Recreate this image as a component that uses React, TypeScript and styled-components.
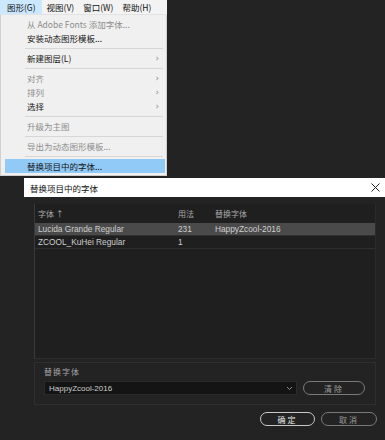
import { createGlobalStyle } from "styled-components"
import styled from "styled-components"

// ── Global ────────────────────────────────────────────────────────────────────

const GlobalStyle = createGlobalStyle`
    html, body {
        margin: 0;
        padding: 0;
        background: #232323;
    }
    body {
        font-family: "Liberation Sans", "Noto Sans CJK SC", sans-serif;
        width: 385px;
        height: 440px;
        overflow: hidden;
    }
`

const Page = styled.div`
    width: 385px;
    height: 440px;
    background: #232323;
    display: flex;
    flex-direction: column;
`

// ── Menu ──────────────────────────────────────────────────────────────────────

const MenuWrap = styled.div`
    width: 167px;
    display: flex;
    flex-direction: column;
`

const MenuBar = styled.div`
    height: 14px;
    background: #f3f3f3;
    border-bottom: 1px solid #e2e2e2;
    display: flex;
    align-items: stretch;
    font-family: "Noto Sans CJK SC", sans-serif;
    font-size: 8.5px;
    color: #111;
`

const MenuBarItem = styled.div<{ $open?: boolean; $lead: number }>`
    display: flex;
    align-items: center;
    padding: 0 ${({ $open }) => ($open ? "6px" : "0")} 0 ${({ $lead }) => $lead}px;
    background: ${({ $open }) => ($open ? "#cce8ff" : "transparent")};
`

const Dropdown = styled.div`
    background: #f0f0f0;
    border: 1px solid #cfcfcf;
    border-top: none;
    padding: 2px 1px 2px 4px;
    display: flex;
    flex-direction: column;
    font-family: "Noto Sans CJK SC", sans-serif;
    font-size: 8.5px;
`

const MenuItem = styled.div<{ $disabled?: boolean; $active?: boolean }>`
    height: 14px;
    display: flex;
    align-items: center;
    justify-content: space-between;
    padding: 0 6px 0 22px;
    color: ${({ $disabled }) => ($disabled ? "#8d8d8d" : "#141414")};
    background: ${({ $active }) => ($active ? "#91c9f7" : "transparent")};
`

const Arrow = styled.span`
    color: #8a8a8a;
    font-size: 9px;
    font-family: "DejaVu Sans", sans-serif;
`

const MenuSep = styled.div`
    height: 1px;
    background: #d7d7d7;
    margin: 3px 2px 2px 20px;
`

// ── Dialog ────────────────────────────────────────────────────────────────────

const Dialog = styled.div`
    margin: 2px 0 0 24px;
    flex: 1;
    display: flex;
    flex-direction: column;
`

const TitleBar = styled.div`
    height: 19px;
    background: #ffffff;
    display: flex;
    align-items: center;
    justify-content: space-between;
    padding: 0 5px 0 6px;
    font-family: "Noto Sans CJK SC", sans-serif;
    font-size: 8.5px;
    color: #111;
`

const DialogBody = styled.div`
    padding: 7px 9px 0 10px;
    display: flex;
    flex-direction: column;
`

const TablePanel = styled.div`
    height: 155px;
    background: #1f1f1f;
    border-left: 1px solid #3a3a3a;
    border-right: 1px solid #2a2a2a;
    border-bottom: 1px solid #2c2c2c;
    box-sizing: border-box;
    padding: 2px 0 0 0;
    font-size: 8px;
    color: #c8c8c8;
`

const TableRow = styled.div<{ $selected?: boolean; $header?: boolean }>`
    display: grid;
    grid-template-columns: 140px 37px 1fr;
    height: ${({ $header }) => ($header ? "15px" : "12px")};
    align-items: center;
    padding-left: 3px;
    background: ${({ $selected }) => ($selected ? "#4a4a4a" : "transparent")};
    border-bottom: 1px solid ${({ $header }) => ($header ? "transparent" : "#2f2f2f")};
    font-family: ${({ $header }) =>
        $header ? `"Noto Sans CJK SC", sans-serif` : `"Liberation Sans", sans-serif`};
    font-size: ${({ $header }) => ($header ? "8px" : "8.3px")};
    color: ${({ $header }) => ($header ? "#a9a9a9" : "#cfcfcf")};
    margin-bottom: ${({ $header }) => ($header ? "1px" : "0")};
`

const GroupBox = styled.div`
    margin-top: 3px;
    height: 43px;
    border: 1px solid #2f2f2f;
    box-sizing: border-box;
    padding: 3px 10px 0 9px;
    display: flex;
    flex-direction: column;
    gap: 4px;
`

const GroupLabel = styled.div`
    font-family: "Noto Sans CJK SC", sans-serif;
    font-size: 8px;
    color: #a6a6a6;
    letter-spacing: 1px;
`

const FieldRow = styled.div`
    display: flex;
    align-items: center;
    gap: 6px;
`

const SelectBox = styled.div`
    width: 253px;
    height: 12px;
    background: #141414;
    border: 1px solid #2a2a2a;
    display: flex;
    align-items: center;
    justify-content: space-between;
    padding: 0 3px 0 4px;
    box-sizing: content-box;
    font-size: 8px;
    color: #cdcdcd;
`

const PillButton = styled.div<{ $w: number; $primary?: boolean }>`
    width: ${({ $w }) => $w}px;
    height: 12px;
    border: 1px solid ${({ $primary }) => ($primary ? "#c8c8c8" : "#7a7a7a")};
    border-radius: 8px;
    display: flex;
    align-items: center;
    justify-content: center;
    font-family: "Noto Sans CJK SC", sans-serif;
    font-size: 8px;
    letter-spacing: 2px;
    color: ${({ $primary }) => ($primary ? "#e6e6e6" : "#9a9a9a")};
`

const ButtonRow = styled.div`
    display: flex;
    justify-content: flex-end;
    gap: 6px;
    padding: 7px 0 0 0;
    margin-right: -1px;
`

// ── Icons ─────────────────────────────────────────────────────────────────────

function CloseIcon() {
    return (
        <svg width="9" height="9" viewBox="0 0 9 9">
            <path d="M0.5 0.5 L8.5 8.5 M8.5 0.5 L0.5 8.5" stroke="#222" strokeWidth="1" />
        </svg>
    )
}

function Chevron() {
    return (
        <svg width="7" height="5" viewBox="0 0 7 5">
            <path d="M1 1 L3.5 3.5 L6 1" stroke="#8a8a8a" strokeWidth="1" fill="none" />
        </svg>
    )
}

// ── Data ──────────────────────────────────────────────────────────────────────

type Entry =
    | { kind: "item"; label: string; disabled?: boolean; sub?: boolean; active?: boolean }
    | { kind: "sep" }

const menuBar = [
    { label: "图形(G)", lead: 7, open: true },
    { label: "视图(V)", lead: 5 },
    { label: "窗口(W)", lead: 9 },
    { label: "帮助(H)", lead: 9 },
]

const menu: Entry[] = [
    { kind: "item", label: "从 Adobe Fonts 添加字体...", disabled: true },
    { kind: "item", label: "安装动态图形模板..." },
    { kind: "sep" },
    { kind: "item", label: "新建图层(L)", sub: true },
    { kind: "sep" },
    { kind: "item", label: "对齐", disabled: true, sub: true },
    { kind: "item", label: "排列", disabled: true, sub: true },
    { kind: "item", label: "选择", sub: true },
    { kind: "sep" },
    { kind: "item", label: "升级为主图", disabled: true },
    { kind: "sep" },
    { kind: "item", label: "导出为动态图形模板...", disabled: true },
    { kind: "sep" },
    { kind: "item", label: "替换项目中的字体...", active: true },
]

const fonts = [
    { name: "Lucida Grande Regular", uses: "231", replace: "HappyZcool-2016" },
    { name: "ZCOOL_KuHei Regular", uses: "1", replace: "" },
]

// ── App ───────────────────────────────────────────────────────────────────────

export default function App() {
    return (
        <Page>
            <GlobalStyle />
            <MenuWrap>
                <MenuBar>
                    {menuBar.map((b) => (
                        <MenuBarItem key={b.label} $lead={b.lead} $open={b.open}>
                            {b.label}
                        </MenuBarItem>
                    ))}
                </MenuBar>
                <Dropdown>
                    {menu.map((m, i) =>
                        m.kind === "sep" ? (
                            <MenuSep key={i} />
                        ) : (
                            <MenuItem key={i} $disabled={m.disabled} $active={m.active}>
                                <span>{m.label}</span>
                                {m.sub && <Arrow>›</Arrow>}
                            </MenuItem>
                        )
                    )}
                </Dropdown>
            </MenuWrap>
            <Dialog>
                <TitleBar>
                    <span>替换项目中的字体</span>
                    <CloseIcon />
                </TitleBar>
                <DialogBody>
                    <TablePanel>
                        <TableRow $header>
                            <span>字体 ↑</span>
                            <span>用法</span>
                            <span>替换字体</span>
                        </TableRow>
                        {fonts.map((f, i) => (
                            <TableRow key={f.name} $selected={i === 0}>
                                <span>{f.name}</span>
                                <span>{f.uses}</span>
                                <span>{f.replace}</span>
                            </TableRow>
                        ))}
                    </TablePanel>
                    <GroupBox>
                        <GroupLabel>替换字体</GroupLabel>
                        <FieldRow>
                            <SelectBox>
                                <span>HappyZcool-2016</span>
                                <Chevron />
                            </SelectBox>
                            <PillButton $w={62}>清除</PillButton>
                        </FieldRow>
                    </GroupBox>
                    <ButtonRow>
                        <PillButton $w={53} $primary>
                            确定
                        </PillButton>
                        <PillButton $w={54}>取消</PillButton>
                    </ButtonRow>
                </DialogBody>
            </Dialog>
        </Page>
    )
}
